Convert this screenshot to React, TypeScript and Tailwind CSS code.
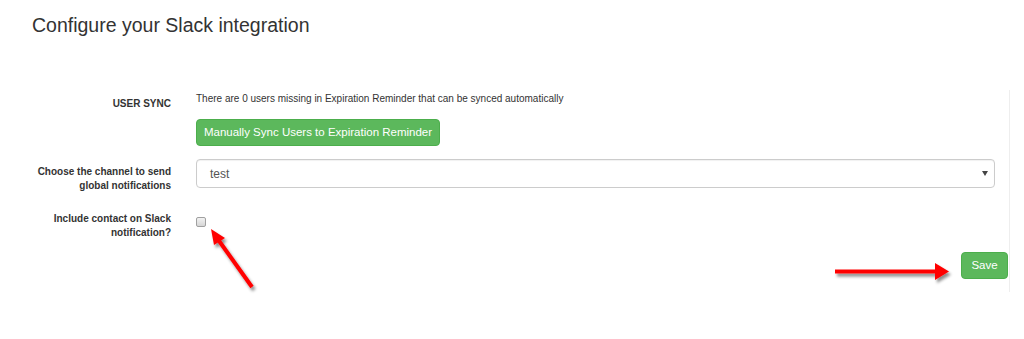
export default function App() {
  return (
    <main className="relative w-[1024px] h-[339px] bg-white overflow-hidden font-['Liberation_Sans',Arial,sans-serif] text-[#333]">
      {/* TITLE */}
      <h1 className="pl-[32px] pt-[13px] text-[19.5px] leading-[24px] font-normal text-[#333]">
        Configure your Slack integration
      </h1>

      {/* FORM */}
      <form className="mt-[53px] w-[1010px] border-r border-[#eeeeee] pt-[2px] pb-[13px] flex flex-col">
        {/* USER SYNC */}
        <div className="flex gap-[24px]">
          <label className="w-[172px] shrink-0 text-right text-[10px] leading-[14px] font-bold pt-[5px] pr-[1px]">
            USER SYNC
          </label>
          <div className="flex flex-col items-start">
            <p className="text-[10px] leading-[14px]">
              There are 0 users missing in Expiration Reminder that can be synced automatically
            </p>
            <button
              type="button"
              className="mt-[13px] h-[27px] w-[244px] rounded-[4px] bg-[#5cb85c] border border-[#4cae4c] text-white text-[11.5px] leading-none"
            >
              Manually Sync Users to Expiration Reminder
            </button>
          </div>
        </div>

        {/* CHANNEL */}
        <div className="flex gap-[24px] mt-[13px]">
          <label className="w-[172px] shrink-0 text-right text-[10px] leading-[14px] font-bold pt-[6px] pr-[1px]">
            Choose the channel to send
            <br />
            global notifications
          </label>
          <div className="w-[799px] h-[29px] rounded-[4px] border border-[#cccccc] shadow-[inset_0_1px_1px_rgba(0,0,0,0.06)] flex items-center justify-between pl-[13px] pr-[6px]">
            <span className="text-[12px] text-[#555]">test</span>
            <svg width="6" height="5" viewBox="0 0 6 5">
              <path d="M0 0 L6 0 L3 5 Z" fill="#444" />
            </svg>
          </div>
        </div>

        {/* CONTACT */}
        <div className="flex gap-[24px] mt-[19px]">
          <label className="w-[172px] shrink-0 text-right text-[10px] leading-[14px] font-bold pr-[1px]">
            Include contact on Slack
            <br />
            notification?
          </label>
          <div className="pt-[5px]">
            <span className="block w-[10px] h-[10px] rounded-[2px] border border-[#a0a0a0] bg-gradient-to-b from-[#f2f2f2] to-[#d6d6d6]" />
          </div>
        </div>

        {/* SAVE */}
        <div className="flex justify-end mt-[12px] pr-[1px]">
          <button
            type="button"
            className="h-[27px] w-[47px] rounded-[4px] bg-[#5cb85c] border border-[#4cae4c] text-white text-[11.5px] leading-none"
          >
            Save
          </button>
        </div>
      </form>

      {/* ANNOTATION ARROWS */}
      <svg className="absolute inset-0 pointer-events-none" width="1024" height="339" viewBox="0 0 1024 339">
        <defs>
          <filter id="sh" x="-20%" y="-20%" width="140%" height="140%">
            <feDropShadow dx="2" dy="3" stdDeviation="1.5" floodColor="#000" floodOpacity="0.45" />
          </filter>
        </defs>
        <g filter="url(#sh)" fill="#ff0000" stroke="none">
          <line x1="252" y1="287" x2="217" y2="238" stroke="#ff0000" strokeWidth="4" />
          <path d="M211 229 L225 238 L214 245 Z" />
          <line x1="835" y1="271.5" x2="937" y2="271.5" stroke="#ff0000" strokeWidth="4" />
          <path d="M949 271.5 L935 263 L935 280 Z" />
        </g>
      </svg>
    </main>
  );
}
